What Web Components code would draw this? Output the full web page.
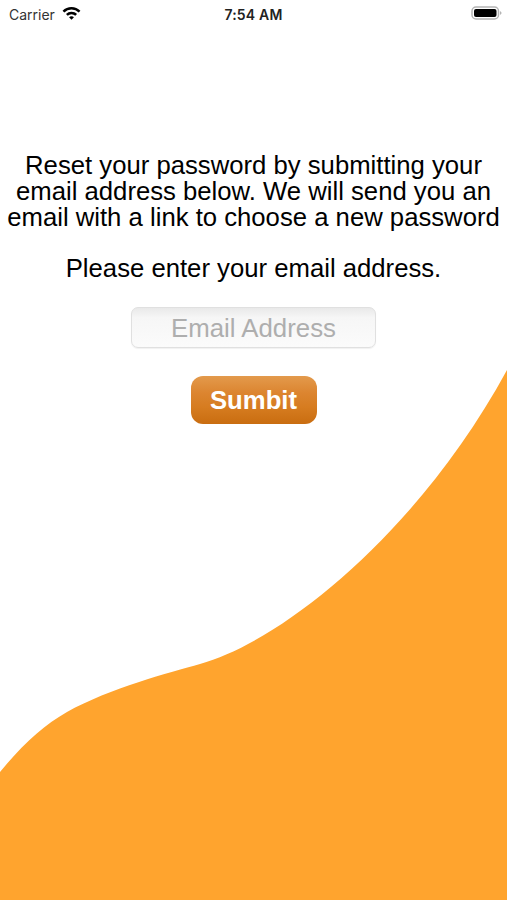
<!DOCTYPE html>
<html lang="en">
<head>
<meta charset="UTF-8">
<title>Reset password</title>
<style>
  html, body { margin: 0; padding: 0; background: #fff; }
  body { width: 507px; height: 900px; overflow: hidden; position: relative; font-family: "Liberation Sans", Arial, sans-serif; }
</style>
</head>
<body>
  <wave-background></wave-background>
  <status-bar carrier="Carrier" time="7:54 AM"></status-bar>
  <reset-form>
    <span slot="intro">Reset your password by submitting your<br>email address below. We will send you an<br>email with a link to choose a new password</span>
    <span slot="prompt">Please enter your email address.</span>
  </reset-form>

<script>
  class StatusBar extends HTMLElement {
    constructor() {
      super()
      this.attachShadow({ mode: 'open' })
    }
    connectedCallback() {
      this.shadowRoot.innerHTML = `
      <style>
        :host { display: flex; align-items: center; justify-content: space-between; height: 28px; padding: 0 5px 0 9px; box-sizing: border-box; position: relative; font-family: "Inter", "Liberation Sans", sans-serif; color: #222; }
        .left { display: flex; align-items: center; gap: 6px; font-size: 14px; color: #333; }
        .time { position: absolute; left: 0; right: 0; text-align: center; font-size: 14px; font-weight: 600; letter-spacing: .2px; }
        svg { display: block; }
        .battery { margin-top: -2px; }
      </style>
      <div class="left">
        <span>${this.getAttribute('carrier')}</span>
        <svg width="21" height="16" viewBox="0 0 19 14.500" style="margin-top:-3px">
          <path d="M9.5 1.800c3.100 0 6 1.300 8.100 3.400l-1.600 1.700a9 9 0 0 0-13 0L1.400 5.200A11.400 11.400 0 0 1 9.500 1.800z" fill="#000"/>
          <path d="M9.500 6.100c2 0 3.700.8 5 2l-1.600 1.700a4.800 4.800 0 0 0-6.800 0L4.500 8.100a7 7 0 0 1 5-2z" fill="#000"/>
          <path d="M9.500 10.200c.9 0 1.600.3 2.200.9l-2.200 2.300-2.200-2.300c.6-.6 1.300-.9 2.200-.9z" fill="#000"/>
        </svg>
      </div>
      <div class="time">${this.getAttribute('time')}</div>
      <svg class="battery" width="31" height="14" viewBox="0 0 31 14">
        <rect x="1" y="1" width="26.500" height="12" rx="4" fill="none" stroke="#b4b4b4" stroke-width="1.500"/>
        <rect x="3" y="3" width="22.500" height="8" rx="2" fill="#000"/>
        <path d="M29 5.200c1 .3 1.500 1 1.500 1.800s-.5 1.500-1.500 1.800z" fill="#b4b4b4"/>
      </svg>`
    }
  }

  class ResetForm extends HTMLElement {
    constructor() {
      super()
      this.attachShadow({ mode: 'open' })
    }
    connectedCallback() {
      this.shadowRoot.innerHTML = `
      <style>
        :host { display: flex; flex-direction: column; align-items: center; position: relative; padding-top: 124px; font-family: "Liberation Sans", Arial, sans-serif; color: #000; }
        .text { font-size: 25.700px; line-height: 26px; text-align: center; white-space: nowrap; }
        .prompt { margin-top: 25px; }
      </style>
      <div class="text"><slot name="intro"></slot></div>
      <div class="text prompt"><slot name="prompt"></slot></div>
      <email-field placeholder="Email Address"></email-field>
      <submit-button label="Sumbit"></submit-button>`
    }
  }

  class EmailField extends HTMLElement {
    constructor() {
      super()
      this.attachShadow({ mode: 'open' })
    }
    connectedCallback() {
      this.shadowRoot.innerHTML = `
      <style>
        :host { display: flex; align-items: center; justify-content: center; box-sizing: border-box; width: 245px; height: 41px; margin-top: 26px; padding-top: 2px; border: 1px solid #e0e0e0; border-radius: 7px; background: linear-gradient(#e9e9e9, #f6f6f6 25%, #fbfbfb); box-shadow: 0 1px 1px rgba(0,0,0,.06); font-size: 25.800px; color: #aeaeae; }
      </style>
      <span>${this.getAttribute('placeholder')}</span>`
    }
  }

  class SubmitButton extends HTMLElement {
    constructor() {
      super()
      this.attachShadow({ mode: 'open' })
    }
    connectedCallback() {
      this.shadowRoot.innerHTML = `
      <style>
        :host { display: flex; align-items: center; justify-content: center; width: 126px; height: 48px; margin-top: 28px; border-radius: 12px; background: linear-gradient(#e39a4c, #dc8530 35%, #d67c20 65%, #c96d10); font-size: 25.700px; font-weight: bold; color: #fff; }
      </style>
      <span>${this.getAttribute('label')}</span>`
    }
  }

  class WaveBackground extends HTMLElement {
    constructor() {
      super()
      this.attachShadow({ mode: 'open' })
    }
    connectedCallback() {
      this.shadowRoot.innerHTML = `
      <style>
        :host { display: block; position: absolute; left: 0; top: 0; width: 507px; height: 900px; }
        svg { display: block; }
      </style>
      <svg width="507" height="900" viewBox="0 0 507 900">
        <path d="M0 772C22 745 44 725 67 712C110 688 170 672.500 200 664C285 640 420 530 507 370V900H0Z" fill="#ffa42e"/>
      </svg>`
    }
  }

  customElements.define('status-bar', StatusBar)
  customElements.define('reset-form', ResetForm)
  customElements.define('email-field', EmailField)
  customElements.define('submit-button', SubmitButton)
  customElements.define('wave-background', WaveBackground)
</script>
</body>
</html>
